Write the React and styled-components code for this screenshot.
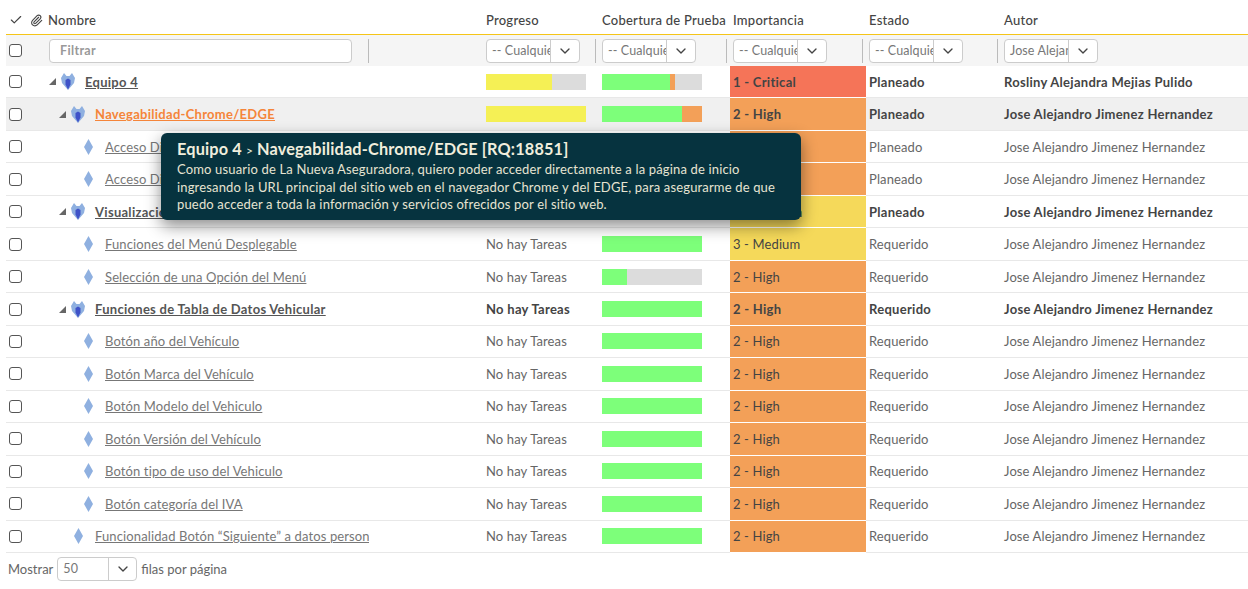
import React from "react";
import styled, { createGlobalStyle } from "styled-components";
import { Check, Paperclip, ChevronDown } from "lucide-react";

const GlobalStyle = createGlobalStyle`
  html, body { margin: 0; padding: 0; background: #fff; }
  body { font-family: "Lato", "Open Sans", sans-serif; color: #444; overflow: hidden; }
`;

const columns = "40px 326px 111px 116px 131px 136px 135px 1fr";

const Page = styled.div`
  position: relative;
  width: 1248px;
  height: 589px;
  padding-left: 6px;
  box-sizing: border-box;
`;

const HeaderRow = styled.div`
  display: grid;
  grid-template-columns: ${columns};
  height: 28px;
  padding-top: 6px;
  border-bottom: 1px solid #f5c518;
  align-items: center;
  font-size: 13px;
  font-weight: 500;
  letter-spacing: 0.25px;
  color: #444;
`;

const HeaderIcons = styled.div`
  display: flex;
  align-items: center;
  gap: 7px;
  padding-left: 3px;
  color: #444;
`;

const HeaderCell = styled.div`
  padding-left: ${(p) => p.$pad ?? 3}px;
  white-space: nowrap;
`;

const FilterRow = styled.div`
  display: grid;
  grid-template-columns: ${columns};
  height: 31px;
  background: #f5f5f5;
  align-items: center;
`;

const FilterCell = styled.div`
  position: relative;
  display: flex;
  align-items: center;
  padding-left: ${(p) => p.$pad ?? 3}px;
  height: 24px;
`;

const Separator = styled.span`
  position: absolute;
  right: 3px;
  top: 0;
  bottom: 0;
  width: 1px;
  background: #bbb;
`;

const TextFilter = styled.input`
  width: 303px;
  height: 24px;
  box-sizing: border-box;
  margin-left: 3px;
  padding: 0 10px;
  border: 1px solid #ccc;
  border-radius: 4px;
  background: #fff;
  font: 700 12.5px "Lato", sans-serif;
  letter-spacing: 0.35px;
  outline: none;
  &::placeholder { color: #999; opacity: 1; }
`;

const SelectBox = styled.div`
  display: flex;
  width: ${(p) => p.$width ?? 94}px;
  height: 24px;
  box-sizing: border-box;
  border: 1px solid #ccc;
  border-radius: 4px;
  background: #fff;
  color: #777;
  font-size: 12.5px;
  letter-spacing: 0.1px;
`;

const SelectValue = styled.div`
  width: ${(p) => p.$width ?? 64}px;
  padding-left: 5px;
  box-sizing: border-box;
  overflow: hidden;
  white-space: nowrap;
  line-height: 22px;
  border-right: 1px solid #ccc;
`;

const SelectArrow = styled.div`
  flex: 1;
  display: flex;
  align-items: center;
  justify-content: center;
  color: #444;
`;

const Row = styled.div`
  display: grid;
  grid-template-columns: ${columns};
  height: 32.47px;
  box-sizing: border-box;
  border-bottom: 1px solid #e8e8e8;
  align-items: center;
  background: ${(p) => (p.$hover ? "#f0f0f0" : "#fff")};
  font-size: 13px;
  letter-spacing: ${(p) => (p.$strong ? 0.28 : 0.12)}px;
  font-weight: ${(p) => (p.$strong ? 700 : 400)};
  color: ${(p) => (p.$strong ? "#444" : "#666")};
`;

const CheckCell = styled.div`
  display: flex;
  align-items: center;
  padding-left: 3px;
`;

const Box = styled.input.attrs({ type: "checkbox" })`
  appearance: none;
  width: 13px;
  height: 13px;
  margin: 0;
  border: 1px solid #555;
  border-radius: 3px;
  background: #fff;
`;

const NameCell = styled.div`
  display: flex;
  align-items: center;
  height: 100%;
  overflow: hidden;
  padding-left: ${(p) => p.$indent}px;
  padding-right: 3px;
  white-space: nowrap;
`;

const NameClip = styled.div`
  flex: 1;
  min-width: 0;
  overflow: hidden;
  padding-left: ${(p) => p.$gap}px;
`;

const Triangle = styled.span`
  flex: none;
  width: 0;
  height: 0;
  margin-right: 5px;
  border-style: solid;
  border-width: 0 0 7px 7px;
  border-color: transparent transparent #666 transparent;
`;

const NameLink = styled.a`
  color: ${(p) => (p.$active ? "#f5853a" : p.$strong ? "#555" : "#777")};
  text-decoration: underline;
`;

const Cell = styled.div`
  padding-left: 3px;
  white-space: nowrap;
  overflow: hidden;
`;

const Bar = styled.div`
  display: flex;
  width: 100px;
  height: 16px;
  background: #dcdcdc;
`;

const Segment = styled.div`
  background: ${(p) => p.$color};
`;

const Priority = styled.div`
  box-sizing: border-box;
  padding-left: 3px;
  display: flex;
  align-items: center;
  border-bottom: 1px solid #fff;
  margin-bottom: -1px;
  height: calc(100% + 1px);
  background: ${(p) => p.$color};
  color: #444;
`;

const Footer = styled.div`
  display: flex;
  align-items: center;
  height: 32px;
  padding: 0 0 0 2px;
  gap: 4px;
  font-size: 13px;
  letter-spacing: 0;
  color: #666;
`;

const Tooltip = styled.div`
  position: absolute;
  left: 161px;
  top: 133px;
  width: 640px;
  height: 87px;
  box-sizing: border-box;
  padding: 6px 16px;
  border-radius: 6px;
  background: #06333f;
  box-shadow: 0 6px 16px rgba(0, 0, 0, 0.45);
  color: #e6e4d2;
  font-size: 13px;
  line-height: 17.5px;
  letter-spacing: 0.16px;
  white-space: nowrap;
`;

const TooltipTitle = styled.div`
  font-size: 16.3px;
  font-weight: 700;
  line-height: 20px;
  color: #f0eedd;
  small { font-size: 12px; font-weight: 400; margin: 0 4px; }
`;

const FolderIcon = () => (
  <svg width="14" height="17" viewBox="0 0 14 17" style={{ flex: "none" }}>
    <path d="M0 5 L3 0 L5.5 3 L8.5 3 L11 0 L14 5 L13 10 L7 17 L1 10 Z" fill="#8fb0e0" />
    <path d="M4.5 7 L7 5.5 L9.5 7 L9.5 11.5 L7 16.5 L4.5 11.5 Z" fill="#3f52c8" />
  </svg>
);

const LeafIcon = () => (
  <svg width="9" height="16" viewBox="0 0 9 16" style={{ flex: "none" }}>
    <path d="M4.5 0 L9 8 L4.5 16 L0 8 Z" fill="#8fb0e0" />
  </svg>
);

const RED = "#f57458";
const ORANGE = "#f3a058";
const YELLOW = "#f5d95a";

const leaf = (name, priority, estado, extra = {}) => ({
  name,
  level: 2,
  progress: null,
  cover: [100, 0],
  priority,
  estado,
  autor: "Jose Alejandro Jimenez Hernandez",
  ...extra,
});

const rows = [
  { name: "Equipo 4", level: 0, folder: true, strong: true, progress: 66, cover: [68, 5], priority: "1 - Critical", color: RED, estado: "Planeado", autor: "Rosliny Alejandra Mejias Pulido" },
  { name: "Navegabilidad-Chrome/EDGE", level: 1, folder: true, strong: true, active: true, hover: true, progress: 100, cover: [80, 20], priority: "2 - High", color: ORANGE, estado: "Planeado", autor: "Jose Alejandro Jimenez Hernandez" },
  leaf("Acceso Directo Chrome", "2 - High", "Planeado", { color: ORANGE, progress: 100, cover: [80, 20] }),
  leaf("Acceso Directo EDGE", "2 - High", "Planeado", { color: ORANGE, progress: 100, cover: [80, 20] }),
  { name: "Visualización del Menú", level: 1, folder: true, strong: true, progress: null, cover: [100, 0], priority: "3 - Medium", color: YELLOW, estado: "Planeado", autor: "Jose Alejandro Jimenez Hernandez" },
  leaf("Funciones del Menú Desplegable", "3 - Medium", "Requerido", { color: YELLOW }),
  leaf("Selección de una Opción del Menú", "2 - High", "Requerido", { color: ORANGE, cover: [25, 0] }),
  { name: "Funciones de Tabla de Datos Vehicular", level: 1, folder: true, strong: true, progress: null, cover: [100, 0], priority: "2 - High", color: ORANGE, estado: "Requerido", autor: "Jose Alejandro Jimenez Hernandez" },
  leaf("Botón año del Vehículo", "2 - High", "Requerido", { color: ORANGE }),
  leaf("Botón Marca del Vehículo", "2 - High", "Requerido", { color: ORANGE }),
  leaf("Botón Modelo del Vehiculo", "2 - High", "Requerido", { color: ORANGE }),
  leaf("Botón Versión del Vehículo", "2 - High", "Requerido", { color: ORANGE }),
  leaf("Botón tipo de uso del Vehiculo", "2 - High", "Requerido", { color: ORANGE }),
  leaf("Botón categoría del IVA", "2 - High", "Requerido", { color: ORANGE }),
  leaf("Funcionalidad Botón “Siguiente” a datos personales", "2 - High", "Requerido", { color: ORANGE, level: 1 }),
];

const Filter = ({ value = "-- Cualquiera --", width, valueWidth }) => (
  <SelectBox $width={width}>
    <SelectValue $width={valueWidth}>{value}</SelectValue>
    <SelectArrow>
      <ChevronDown size={16} />
    </SelectArrow>
  </SelectBox>
);

const NameContent = ({ row }) => {
  const indent = row.folder ? 3 + row.level * 10 : row.level === 2 ? 38 : 28;
  return (
    <NameCell $indent={indent}>
      {row.folder && <Triangle />}
      {row.folder ? <FolderIcon /> : <LeafIcon />}
      <NameClip $gap={row.folder ? 10 : 12}>
        <NameLink $active={row.active} $strong={row.strong}>
          {row.name}
        </NameLink>
      </NameClip>
    </NameCell>
  );
};

export default function App() {
  return (
    <Page>
      <GlobalStyle />
      <HeaderRow>
        <HeaderIcons>
          <Check size={14} />
          <Paperclip size={13} />
        </HeaderIcons>
        <HeaderCell $pad={2}>Nombre</HeaderCell>
        <HeaderCell />
        <HeaderCell>Progreso</HeaderCell>
        <HeaderCell>Cobertura de Prueba</HeaderCell>
        <HeaderCell>Importancia</HeaderCell>
        <HeaderCell>Estado</HeaderCell>
        <HeaderCell>Autor</HeaderCell>
      </HeaderRow>
      <FilterRow>
        <CheckCell>
          <Box />
        </CheckCell>
        <FilterCell $pad={0}>
          <TextFilter placeholder="Filtrar" />
          <Separator />
        </FilterCell>
        <FilterCell />
        <FilterCell>
          <Filter />
          <Separator />
        </FilterCell>
        <FilterCell>
          <Filter />
          <Separator />
        </FilterCell>
        <FilterCell>
          <Filter />
          <Separator />
        </FilterCell>
        <FilterCell>
          <Filter />
          <Separator />
        </FilterCell>
        <FilterCell>
          <Filter value="Jose Alejandro Jimenez" />
        </FilterCell>
      </FilterRow>
      {rows.map((row) => (
        <Row key={row.name} $hover={row.hover} $strong={row.strong}>
          <CheckCell>
            <Box />
          </CheckCell>
          <NameContent row={row} />
          <div />
          <Cell>
            {row.progress === null ? (
              "No hay Tareas"
            ) : (
              <Bar>
                <Segment $color="#f5f055" style={{ width: `${row.progress}%` }} />
              </Bar>
            )}
          </Cell>
          <Cell>
            <Bar>
              <Segment $color="#7dff7a" style={{ width: `${row.cover[0]}%` }} />
              <Segment $color="#f3a058" style={{ width: `${row.cover[1]}%` }} />
            </Bar>
          </Cell>
          <Priority $color={row.color}>{row.priority}</Priority>
          <Cell>{row.estado}</Cell>
          <Cell>{row.autor}</Cell>
        </Row>
      ))}
      <Footer>
        <span>Mostrar</span>
        <SelectBox $width={80}>
          <SelectValue $width={51}>50</SelectValue>
          <SelectArrow>
            <ChevronDown size={16} />
          </SelectArrow>
        </SelectBox>
        <span>filas por página</span>
      </Footer>
      <Tooltip>
        <TooltipTitle>
          Equipo 4<small>&gt;</small>Navegabilidad-Chrome/EDGE [RQ:18851]
        </TooltipTitle>
        <div>
          Como usuario de La Nueva Aseguradora, quiero poder acceder directamente a la página de inicio
          <br />
          ingresando la URL principal del sitio web en el navegador Chrome y del EDGE, para asegurarme de que
          <br />
          puedo acceder a toda la información y servicios ofrecidos por el sitio web.
        </div>
      </Tooltip>
    </Page>
  );
}
